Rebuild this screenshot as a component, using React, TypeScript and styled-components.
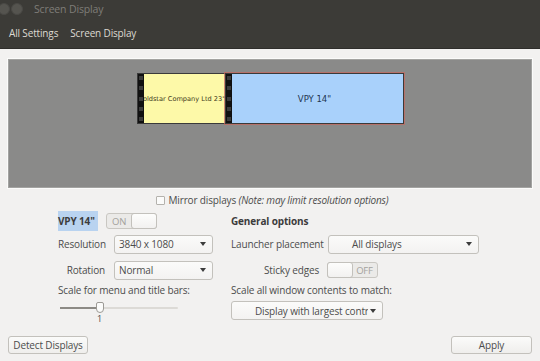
import React from "react";
import styled, { createGlobalStyle } from "styled-components";

const GlobalStyle = createGlobalStyle`
  html, body {
    margin: 0;
    padding: 0;
    background: #f2f1f0;
  }
  body {
    width: 540px;
    height: 361px;
    overflow: hidden;
    font-family: "Open Sans", "Noto Sans", sans-serif;
    font-size: 10px;
    letter-spacing: -0.15px;
    color: #4c4c4c;
  }
`;

const Window = styled.div`
  width: 540px;
  height: 361px;
  display: flex;
  flex-direction: column;
  background: #f2f1f0;
`;

const TitleBar = styled.div`
  height: 17px;
  flex-shrink: 0;
  background: #3c3b37;
  display: flex;
  align-items: center;
  gap: 11px;
`;

const WinButtons = styled.div`
  display: flex;
  gap: 1px;
  margin-left: -2px;
`;

const WinButton = styled.span`
  width: 10px;
  height: 10px;
  border-radius: 50%;
  background: #55544f;
  border: 1px solid #4a4945;
`;

const TitleText = styled.span`
  color: #7f7d77;
  font-size: 10.5px;
`;

const HeaderBar = styled.div`
  height: 31px;
  flex-shrink: 0;
  background: #3c3b37;
  display: flex;
  align-items: center;
  gap: 12px;
  padding-left: 9px;
  border-bottom: 1px solid #2f2e2b;
`;

const Crumb = styled.span`
  color: #dcd9d2;
  font-size: 10px;
`;

const Body = styled.div`
  flex: 1;
  min-height: 0;
  display: flex;
  flex-direction: column;
  padding: 10px 8px 0 8px;
  & > * {
    flex-shrink: 0;
  }
`;

const Arrangement = styled.div`
  position: relative;
  height: 127px;
  background: #8a8a89;
  border: 1px solid #a3a3a1;
  box-shadow: 0 0 0 1px #fbfbfa;
`;

const Monitor = styled.div<{ $x: number; $w: number; $bg: string; $sel?: boolean }>`
  position: absolute;
  left: ${(p) => p.$x}px;
  top: 13px;
  width: ${(p) => p.$w}px;
  height: 51px;
  background: ${(p) => p.$bg};
  border: 1px solid #3a3a3a;
  box-shadow: ${(p) => (p.$sel ? "0 0 0 1px rgba(196, 104, 96, 0.75)" : "none")};
  box-sizing: border-box;
  display: flex;
  align-items: center;
  overflow: hidden;
`;

const Strip = styled.div`
  width: 6px;
  align-self: stretch;
  background: #111;
  display: flex;
  flex-direction: column;
  justify-content: space-between;
  align-items: center;
  padding: 2px 0;
  flex-shrink: 0;
  position: relative;
  z-index: 1;
`;

const Hole = styled.span`
  width: 4px;
  height: 4px;
  background: #3d3d3d;
`;

const MonLabel = styled.div<{ $size: number; $color: string }>`
  flex: 1;
  min-width: 0;
  margin-left: -6px;
  white-space: nowrap;
  font-family: "DejaVu Sans", sans-serif;
  letter-spacing: 0;
  font-size: ${(p) => p.$size}px;
  color: ${(p) => p.$color};
  display: flex;
  justify-content: center;
  & > span {
    flex-shrink: 0;
  }
`;

const MirrorRow = styled.div`
  display: flex;
  justify-content: center;
  align-items: center;
  gap: 4px;
  margin-top: 5px;
  height: 14px;
  padding-left: 4px;
`;

const Check = styled.span`
  width: 7px;
  height: 7px;
  border: 1px solid #b4b2ad;
  background: #fbfbfa;
  border-radius: 1px;
`;

const Note = styled.i`
  font-style: italic;
`;

const Columns = styled.div`
  display: flex;
  margin-top: 1px;
  padding-left: 50px;
  gap: 18px;
`;

const Column = styled.div<{ $w: number }>`
  width: ${(p) => p.$w}px;
  display: flex;
  flex-direction: column;
`;

const Row = styled.div<{ $h: number; $mt?: number; $gap?: number }>`
  height: ${(p) => p.$h}px;
  margin-top: ${(p) => p.$mt ?? 0}px;
  display: flex;
  align-items: center;
  gap: ${(p) => p.$gap ?? 9}px;
`;

const Label = styled.span<{ $w?: number }>`
  width: ${(p) => (p.$w ? `${p.$w}px` : "auto")};
  text-align: right;
  white-space: nowrap;
  flex-shrink: 0;
`;

const Heading = styled.span<{ $hl?: boolean }>`
  font-weight: 700;
  color: #3c3c3c;
  background: ${(p) => (p.$hl ? "#b9d3f0" : "transparent")};
  padding: ${(p) => (p.$hl ? "3px 3px 3px 0" : "0")};
`;

const Select = styled.div<{ $w: number }>`
  width: ${(p) => p.$w}px;
  height: 19px;
  box-sizing: border-box;
  border: 1px solid #c3c1bc;
  border-radius: 3px;
  background: linear-gradient(#fbfbfa, #f3f2f1);
  display: flex;
  align-items: center;
  padding: 0 6px 0 4px;
  color: #4c4c4c;
  gap: 2px;
`;

const SelectText = styled.span<{ $indent?: number }>`
  flex: 1;
  white-space: nowrap;
  overflow: hidden;
  padding-left: ${(p) => p.$indent ?? 0}px;
`;

const Caret = styled.span`
  width: 0;
  height: 0;
  border-left: 3px solid transparent;
  border-right: 3px solid transparent;
  border-top: 4px solid #3c3c3c;
  flex-shrink: 0;
`;

const Switch = styled.div`
  width: 51px;
  height: 16px;
  box-sizing: border-box;
  border: 1px solid #c9c7c2;
  border-radius: 3px;
  background: #ebeae8;
  display: flex;
  align-items: stretch;
  font-size: 9.5px;
  color: #a4a29d;
`;

const SwitchText = styled.span`
  flex: 1;
  display: flex;
  align-items: center;
  justify-content: center;
`;

const Knob = styled.span`
  width: 24px;
  background: linear-gradient(#fdfdfc, #f2f1f0);
  border: 1px solid #c3c1bc;
  border-radius: 3px;
  margin: -1px;
`;

const SliderWrap = styled.div`
  position: relative;
  height: 24px;
  width: 118px;
  margin-left: 2px;
  margin-top: 2px;
`;

const Track = styled.div`
  position: absolute;
  left: 0;
  right: 0;
  top: 5px;
  height: 2px;
  border-radius: 1px;
  background: #dcdad6;
`;

const TrackFill = styled.div`
  position: absolute;
  left: 0;
  width: 38px;
  top: 5px;
  height: 2px;
  background: #8c8a85;
`;

const Thumb = styled.div`
  position: absolute;
  left: 36px;
  top: 0;
  width: 8px;
  height: 11px;
  box-sizing: border-box;
  border: 1px solid #9c9a95;
  border-radius: 2px 2px 4px 4px;
  background: #fbfbfa;
`;

const Tick = styled.span`
  position: absolute;
  left: 37px;
  top: 10px;
  font-size: 9px;
  color: #4c4c4c;
`;

const WideSelect = styled(Select)`
  margin-top: 1px;
`;

const Footer = styled.div`
  margin-top: auto;
  display: flex;
  justify-content: space-between;
  padding-bottom: 7px;
`;

const Button = styled.div<{ $w: number }>`
  width: ${(p) => p.$w}px;
  height: 18px;
  box-sizing: border-box;
  border: 1px solid #c3c1bc;
  border-radius: 3px;
  background: linear-gradient(#fbfbfa, #efeeec);
  display: flex;
  align-items: center;
  justify-content: center;
  white-space: nowrap;
  color: #4c4c4c;
`;

const Filmstrip = () => (
  <Strip>
    <Hole />
    <Hole />
    <Hole />
    <Hole />
    <Hole />
  </Strip>
);

export default function App() {
  return (
    <Window>
      <GlobalStyle />
      <TitleBar>
        <WinButtons>
          <WinButton />
          <WinButton />
        </WinButtons>
        <TitleText>Screen Display</TitleText>
      </TitleBar>
      <HeaderBar>
        <Crumb>All Settings</Crumb>
        <Crumb>Screen Display</Crumb>
      </HeaderBar>
      <Body>
        <Arrangement>
          <Monitor $x={128} $w={89} $bg="#fdf9a8">
            <Filmstrip />
            <MonLabel $size={6.6} $color="#3d3a20">
              <span>Goldstar Company Ltd 23"</span>
            </MonLabel>
          </Monitor>
          <Monitor $x={216} $w={179} $bg="#a9d1fb" $sel>
            <Filmstrip />
            <MonLabel $size={8.5} $color="#1f3550">
              <span>VPY 14"</span>
            </MonLabel>
          </Monitor>
        </Arrangement>
        <MirrorRow>
          <Check />
          <span>
            Mirror displays <Note>(Note: may limit resolution options)</Note>
          </span>
        </MirrorRow>
        <Columns>
          <Column $w={155}>
            <Row $h={26} $gap={8}>
              <Heading $hl>VPY 14"</Heading>
              <Switch>
                <SwitchText>ON</SwitchText>
                <Knob />
              </Switch>
            </Row>
            <Row $h={20}>
              <Label $w={47}>Resolution</Label>
              <Select $w={100}>
                <SelectText>3840 x 1080</SelectText>
                <Caret />
              </Select>
            </Row>
            <Row $h={20} $mt={6}>
              <Label $w={47}>Rotation</Label>
              <Select $w={100}>
                <SelectText>Normal</SelectText>
                <Caret />
              </Select>
            </Row>
            <Row $h={20}>
              <Label>Scale for menu and title bars:</Label>
            </Row>
            <SliderWrap>
              <Track />
              <TrackFill />
              <Thumb />
              <Tick>1</Tick>
            </SliderWrap>
          </Column>
          <Column $w={250}>
            <Row $h={26}>
              <Heading>General options</Heading>
            </Row>
            <Row $h={20} $gap={9}>
              <Label $w={88}>Launcher placement</Label>
              <Select $w={151}>
                <SelectText $indent={19}>All displays</SelectText>
                <Caret />
              </Select>
            </Row>
            <Row $h={20} $mt={6} $gap={8}>
              <Label $w={88}>Sticky edges</Label>
              <Switch>
                <Knob />
                <SwitchText>OFF</SwitchText>
              </Switch>
            </Row>
            <Row $h={20}>
              <Label>Scale all window contents to match:</Label>
            </Row>
            <WideSelect $w={152}>
              <SelectText $indent={19}>Display with largest controls</SelectText>
              <Caret />
            </WideSelect>
          </Column>
        </Columns>
        <Footer>
          <Button $w={80}>Detect Displays</Button>
          <Button $w={81}>Apply</Button>
        </Footer>
      </Body>
    </Window>
  );
}
